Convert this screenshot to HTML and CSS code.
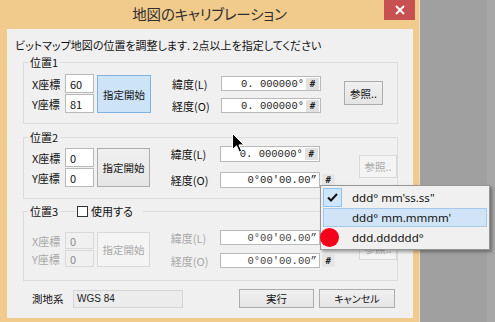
FILE: index.html
```html
<!DOCTYPE html>
<html lang="ja">
<head>
<meta charset="utf-8">
<link rel="stylesheet" href="styles.css">
</head>
<body>
<div class="screen">
  <div class="window">
    <div class="titlebar">
      <span class="title">地図のキャリブレーション</span>
      <span class="close"><svg width="10" height="10" viewBox="0 0 10 10"><path d="M1 1L9 9M9 1L1 9" stroke="#fff" stroke-width="1.8"/></svg></span>
    </div>
    <div class="client">
      <p class="intro">ビットマップ地図の位置を調整します. 2点以上を指定してください</p>

      <div class="group g1">
        <div class="group-title"><span class="gt">位置1</span></div>
        <div class="coords">
          <span class="lbl">X座標</span><span class="input">60</span>
          <span class="lbl">Y座標</span><span class="input">81</span>
        </div>
        <div class="btn start focus">指定開始</div>
        <div class="latlng">
          <span class="lbl">緯度(L)</span>
          <div class="fwrap"><div class="field"><span class="val">0. 000000°</span><span class="hash">#</span></div></div>
          <span class="lbl">経度(O)</span>
          <div class="fwrap"><div class="field"><span class="val">0. 000000°</span><span class="hash">#</span></div></div>
        </div>
        <div class="btn ref">参照..</div>
      </div>

      <div class="group g2">
        <div class="group-title"><span class="gt">位置2</span></div>
        <div class="coords">
          <span class="lbl">X座標</span><span class="input">0</span>
          <span class="lbl">Y座標</span><span class="input">0</span>
        </div>
        <div class="btn start">指定開始</div>
        <div class="latlng">
          <span class="lbl">緯度(L)</span>
          <div class="fwrap"><div class="field"><span class="val">0. 000000°</span><span class="hash">#</span></div></div>
          <span class="lbl">経度(O)</span>
          <div class="fwrap"><div class="field"><span class="val">0°00'00.00”</span></div><span class="hash out">#</span></div>
        </div>
        <div class="btn ref disabled">参照..</div>
      </div>

      <div class="group g3">
        <div class="group-title"><span class="gt">位置3</span><span class="gt use"><span class="checkbox"></span>使用する</span></div>
        <div class="coords dis">
          <span class="lbl">X座標</span><span class="input">0</span>
          <span class="lbl">Y座標</span><span class="input">0</span>
        </div>
        <div class="btn start disabled">指定開始</div>
        <div class="latlng dis">
          <span class="lbl">緯度(L)</span>
          <div class="fwrap"><div class="field"><span class="val">0°00'00.00”</span></div><span class="hash out">#</span></div>
          <span class="lbl">経度(O)</span>
          <div class="fwrap"><div class="field"><span class="val">0°00'00.00”</span></div><span class="hash out">#</span></div>
        </div>
        <div class="btn ref disabled">参照..</div>
      </div>

      <div class="bottom">
        <span class="blbl">測地系</span>
        <span class="datum">WGS 84</span>
        <div class="btn run">実行</div>
        <div class="btn cancel">キャンセル</div>
      </div>
    </div>
  </div>
  <div class="desktop"><div class="stripe"></div></div>

  <div class="menu">
    <div class="item checked"><span class="chk"><svg width="11" height="9" viewBox="0 0 11 9"><path d="M1 4.5L4 7.5L10 1" fill="none" stroke="#111" stroke-width="2"/></svg></span><span class="itxt">ddd° mm'ss.ss"</span></div>
    <div class="item hot"><span class="chk"></span><span class="itxt">ddd° mm.mmmm'</span></div>
    <div class="item"><span class="chk"></span><span class="itxt">ddd.dddddd°</span></div>
  </div>
  <div class="dot"></div>
  <svg class="cursor" width="13" height="20" viewBox="0 0 13 20"><path d="M0.5 0.5L0.5 16.5L4.5 12.8L7.3 19L9.6 18L6.9 11.9L12 11.9Z" fill="#000" stroke="#fff" stroke-width="1"/></svg>
</div>
</body>
</html>
```

FILE: styles.css
```css
html, body {
  margin: 0;
  padding: 0;
}
body {
  width: 495px;
  height: 322px;
  overflow: hidden;
  background: #a0a0a0;
  font-family: "Noto Sans CJK JP", "Noto Sans", sans-serif;
  font-size: 11px;
  color: #111;
  font-feature-settings: "palt";
}
.screen {
  position: relative;
  display: flex;
  width: 495px;
  height: 322px;
}
.window {
  width: 420px;
  height: 322px;
  background: #f1cb8c;
  display: flex;
  flex-direction: column;
  box-sizing: border-box;
  border-right: 1px solid #e8dcc6;
}
.desktop {
  flex: 1;
  background: #a0a0a0;
  display: flex;
  justify-content: flex-end;
}
.stripe {
  width: 8px;
  background: #a7a7a7;
}
.titlebar {
  height: 29px;
  display: grid;
  grid-template-columns: 1fr auto 1fr;
  align-items: start;
}
.title {
  grid-column: 2;
  font-size: 14.5px;
  line-height: 28px;
  color: #2e2e2e;
  letter-spacing: -0.2px;
}
.close {
  grid-column: 3;
  justify-self: end;
  width: 31px;
  height: 20px;
  margin-right: 4px;
  background: #c75050;
  display: flex;
  align-items: center;
  justify-content: center;
}
.client {
  margin: 0 6px 4px 7px;
  height: 289px;
  background: #f0f0f0;
  padding: 8px 0 0 8px;
  box-sizing: border-box;
}
.intro {
  margin: 0 0 9px 0;
  line-height: 16px;
  height: 16px;
  white-space: nowrap;
}
.group {
  position: relative;
  box-sizing: border-box;
  width: 375px;
  margin-left: 8px;
  border: 1px solid #dcdcdc;
  display: flex;
  align-items: flex-start;
  padding: var(--pt) 0 0 8px;
}
.g1 {
  height: 62px;
  --pt: 11px; --r1: 19px; --r2: 19px; --cg: 1px;
  --bmt: 1px; --bh: 38px;
  --lmt: 2px; --lr: 15px; --lg: 7px;
  --rmt: 7px; --rh: 24px;
}
.g2 {
  height: 62px;
  margin-top: 13px;
  --pt: 10px; --r1: 19px; --r2: 19px; --cg: 1px;
  --bmt: 0px; --bh: 39px;
  --lmt: -2px; --lr: 16px; --lg: 10px;
  --rmt: 7px; --rh: 23px;
}
.g3 {
  height: 70px;
  margin-top: 12px;
  --pt: 20px; --r1: 17px; --r2: 17px; --cg: 1px;
  --bmt: 0px; --bh: 35px;
  --lmt: -2px; --lr: 15px; --lg: 8px;
  --rmt: 5px; --rh: 23px;
}
.group-title {
  position: absolute;
  left: 4px;
  top: -9px;
  display: flex;
  gap: 15px;
  line-height: 16px;
}
.gt {
  background: #f0f0f0;
  padding: 0 2px;
  display: flex;
  align-items: center;
}
.gt.use {
  padding-right: 10px;
}
.checkbox {
  width: 11px;
  height: 11px;
  box-sizing: border-box;
  border: 1px solid #333;
  background: #fff;
  margin-right: 3px;
}
.coords {
  display: grid;
  grid-template-columns: 33px 29px;
  grid-template-rows: var(--r1) var(--r2);
  row-gap: var(--cg);
  align-items: center;
}
.input {
  box-sizing: border-box;
  height: 100%;
  border: 1px solid #b9b9b9;
  background: #fff;
  padding-left: 4px;
  display: flex;
  align-items: center;
  font-size: 11px;
}
.coords.dis .lbl, .latlng.dis .lbl {
  color: #a8a8a8;
}
.coords.dis .input {
  background: #f0f0f0;
  border-color: #d9d9d9;
  color: #8a8a8a;
}
.btn {
  box-sizing: border-box;
  border: 1px solid #acacac;
  background: linear-gradient(#f0f0f0, #e5e5e5);
  display: flex;
  align-items: center;
  justify-content: center;
  color: #111;
}
.btn.focus {
  background: #cde3f7;
  border-color: #7fb2e3;
}
.btn.disabled {
  background: #f4f4f4;
  border-color: #d9d9d9;
  color: #a8a8a8;
}
.start {
  width: 54px;
  height: var(--bh);
  margin-left: 3px;
  margin-top: var(--bmt);
  font-size: 10.5px;
}
.latlng {
  margin-left: 21px;
  margin-top: var(--lmt);
  display: grid;
  grid-template-columns: 49px auto;
  grid-template-rows: var(--lr) var(--lr);
  row-gap: var(--lg);
  align-items: center;
}
.fwrap {
  display: flex;
  align-items: center;
  height: 100%;
}
.field {
  box-sizing: border-box;
  width: 100px;
  height: 100%;
  border: 1px solid #b9b9b9;
  background: #fff;
  display: flex;
  align-items: center;
}
.val {
  flex: 1;
  text-align: right;
  padding-right: 2px;
  font-family: "Liberation Mono", "DejaVu Sans Mono", monospace;
  font-size: 10.5px;
  color: #222;
  white-space: nowrap;
  font-feature-settings: normal;
}
.latlng.dis .val {
  color: #444;
}
.hash {
  width: 13px;
  height: 12px;
  background: #e1e1e1;
  display: flex;
  align-items: center;
  justify-content: center;
  font-family: "DejaVu Sans Mono", monospace;
  font-weight: bold;
  font-size: 9px;
  color: #222;
  margin-right: 1px;
}
.hash.out {
  margin-left: 2px;
  height: 13px;
  background: #e6e6e6;
}
.ref {
  width: 39px;
  height: var(--rh);
  margin-left: 23px;
  margin-top: var(--rmt);
  font-size: 10.5px;
}
.bottom {
  display: flex;
  align-items: center;
  margin-top: 8px;
  padding-left: 17px;
  height: 19px;
}
.blbl {
  width: 41px;
  font-size: 10.5px;
}
.datum {
  box-sizing: border-box;
  width: 110px;
  height: 18px;
  border: 1px solid #d5d5d5;
  background: #ececec;
  padding-left: 3px;
  display: flex;
  align-items: center;
  font-family: "Liberation Sans", sans-serif;
  font-size: 10px;
  color: #222;
}
.run {
  width: 75px;
  height: 19px;
  margin-left: 56px;
  font-size: 10.5px;
}
.cancel {
  width: 76px;
  height: 19px;
  margin-left: 5px;
  font-size: 10px;
}
.menu {
  position: absolute;
  left: 320px;
  top: 185px;
  width: 170px;
  box-sizing: border-box;
  background: #f0f0f0;
  border: 1px solid #979797;
  box-shadow: 2px 2px 3px rgba(0,0,0,0.35);
  padding: 2px;
  font-family: "Noto Sans", "Open Sans", sans-serif;
  font-size: 11.5px;
  color: #111;
}
.item {
  height: 19px;
  display: flex;
  align-items: center;
  box-sizing: border-box;
  border: 1px solid transparent;
}
.item + .item {
  margin-top: 1px;
}
.item.hot {
  background: #d1e4f7;
  border-color: #a6c9ec;
}
.chk {
  width: 19px;
  height: 19px;
  margin-left: -1px;
  display: flex;
  align-items: center;
  justify-content: center;
  box-sizing: border-box;
}
.item.checked .chk {
  background: #cde6fb;
  border: 1px solid #8fc3ee;
}
.itxt {
  margin-left: 10px;
  white-space: nowrap;
}
.dot {
  position: absolute;
  left: 320px;
  top: 228px;
  width: 19px;
  height: 19px;
  border-radius: 50%;
  background: #f5001a;
}
.cursor {
  position: absolute;
  left: 232px;
  top: 133px;
}
```
